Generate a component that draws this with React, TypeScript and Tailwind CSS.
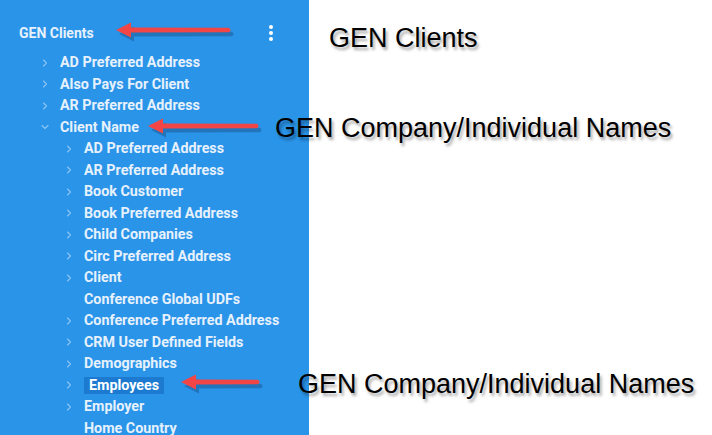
import { ChevronRight, ChevronDown } from 'lucide-react'

type Row = { label: string; level: 1 | 2; icon?: 'right' | 'down' | 'none'; active?: boolean }

const rows: Row[] = [
  { label: 'AD Preferred Address', level: 1, icon: 'right' },
  { label: 'Also Pays For Client', level: 1, icon: 'right' },
  { label: 'AR Preferred Address', level: 1, icon: 'right' },
  { label: 'Client Name', level: 1, icon: 'down' },
  { label: 'AD Preferred Address', level: 2, icon: 'right' },
  { label: 'AR Preferred Address', level: 2, icon: 'right' },
  { label: 'Book Customer', level: 2, icon: 'right' },
  { label: 'Book Preferred Address', level: 2, icon: 'right' },
  { label: 'Child Companies', level: 2, icon: 'right' },
  { label: 'Circ Preferred Address', level: 2, icon: 'right' },
  { label: 'Client', level: 2, icon: 'right' },
  { label: 'Conference Global UDFs', level: 2, icon: 'none' },
  { label: 'Conference Preferred Address', level: 2, icon: 'right' },
  { label: 'CRM User Defined Fields', level: 2, icon: 'right' },
  { label: 'Demographics', level: 2, icon: 'right' },
  { label: 'Employees', level: 2, icon: 'right', active: true },
  { label: 'Employer', level: 2, icon: 'right' },
  { label: 'Home Country', level: 2, icon: 'none' },
]

// red callout arrow, tip on the left
function Arrow({ left, top, width }: { left: number; top: number; width: number }) {
  const shape = `M0 8 L15 0.5 L15 5.5 L${width - 3} 5.7 Q${width} 8 ${width - 3} 10.3 L15 10.5 L15 15.5 Z`
  return (
    <svg
      className="absolute"
      style={{ left, top }}
      width={width + 8}
      height={22}
      viewBox={`0 0 ${width + 8} 22`}
    >
      <path d={shape} transform="translate(3,4)" fill="#143d66" opacity="0.35" />
      <path d={shape} fill="#f24646" />
    </svg>
  )
}

function Note({ left, top, children }: { left: number; top: number; children: string }) {
  return (
    <div
      className="absolute whitespace-nowrap font-['Liberation_Sans',Arial,sans-serif] text-[27px] leading-none text-black [text-shadow:2px_3px_3px_rgba(0,0,0,0.35)]"
      style={{ left, top }}
    >
      {children}
    </div>
  )
}

export default function App() {
  return (
    <div className="relative flex h-[435px] w-[712px] overflow-hidden bg-white font-['Roboto',sans-serif]">
      <div className="flex h-full w-[309px] shrink-0 flex-col bg-[#2a94e9]">
        <div className="mt-[24px] flex h-[18px] items-center justify-between pl-[19px] pr-[36px]">
          <span className="text-[14px] font-bold leading-[18px] text-[#e6f1fc]">GEN Clients</span>
          <div className="flex flex-col gap-[2px]">
            <span className="h-[4px] w-[4px] rounded-full bg-white" />
            <span className="h-[4px] w-[4px] rounded-full bg-white" />
            <span className="h-[4px] w-[4px] rounded-full bg-white" />
          </div>
        </div>
        <div className="mt-[10px] flex flex-col">
          {rows.map((r, i) => (
            <div
              key={i}
              className={`flex h-[21.5px] items-center ${r.level === 1 ? 'pl-[39px]' : 'pl-[63px]'}`}
            >
              <span className="flex w-[21px] shrink-0 items-center">
                {r.icon === 'right' && <ChevronRight size={12} strokeWidth={2.2} className="text-[#8cc4f2]" />}
                {r.icon === 'down' && <ChevronDown size={12} strokeWidth={2.2} className="text-[#8cc4f2]" />}
              </span>
              <span
                className={`whitespace-nowrap text-[14.3px] font-bold leading-[17px] ${
                  r.active ? 'bg-[#1c7bd0] px-[5px] text-white' : 'text-[#e6f1fc]'
                }`}
              >
                {r.label}
              </span>
            </div>
          ))}
        </div>
      </div>

      <Arrow left={116} top={22} width={116} />
      <Arrow left={148} top={118} width={112} />
      <Arrow left={181} top={374} width={80} />

      <Note left={329} top={25}>GEN Clients</Note>
      <Note left={275} top={115}>GEN Company/Individual Names</Note>
      <Note left={298} top={371}>GEN Company/Individual Names</Note>
    </div>
  )
}
